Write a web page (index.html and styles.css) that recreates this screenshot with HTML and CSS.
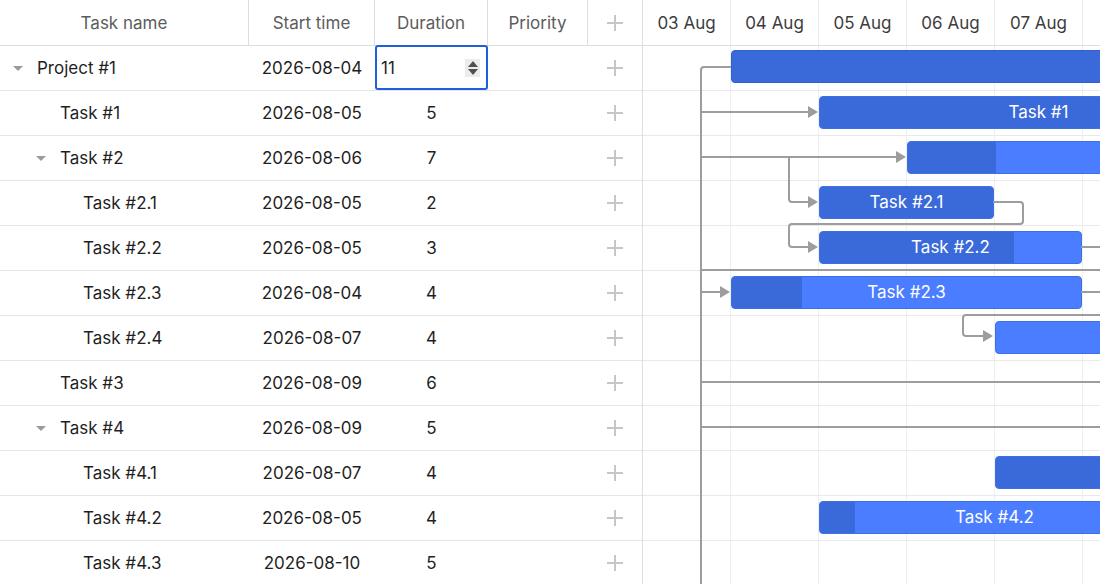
FILE: index.html
```html
<!DOCTYPE html>
<html lang="en">
<head>
    <meta charset="UTF-8">
    <meta name="viewport" content="width=device-width, initial-scale=1.0">
    <title>Gantt</title>
    <link rel="stylesheet" href="styles.css">
</head>
<body>
<div class="gantt">
    <div class="grid">
        <div class="grid-head">
            <div class="head-cell">Task name</div>
            <div class="head-cell">Start time</div>
            <div class="head-cell">Duration</div>
            <div class="head-cell">Priority</div>
            <div class="head-cell last">
                <svg class="plus" width="18" height="18" viewBox="0 0 18 18"><path d="M9 1V17M1 9H17"/></svg>
            </div>
        </div>

        <div class="grid-row">
            <div class="cell name"><span class="toggle"><i></i></span>Project #1</div>
            <div class="cell">2026-08-04</div>
            <div class="cell">
                <div class="editor">
                    <span>11</span>
                    <span class="spin"><i class="up"></i><i class="down"></i></span>
                </div>
            </div>
            <div class="cell"></div>
            <div class="cell"><svg class="plus" width="16" height="16" viewBox="0 0 16 16"><path d="M8 0V16M0 8H16"/></svg></div>
        </div>
        <div class="grid-row">
            <div class="cell name"><span class="indent"></span><span class="toggle"></span>Task #1</div>
            <div class="cell">2026-08-05</div>
            <div class="cell">5</div>
            <div class="cell"></div>
            <div class="cell"><svg class="plus" width="16" height="16" viewBox="0 0 16 16"><path d="M8 0V16M0 8H16"/></svg></div>
        </div>
        <div class="grid-row">
            <div class="cell name"><span class="indent"></span><span class="toggle"><i></i></span>Task #2</div>
            <div class="cell">2026-08-06</div>
            <div class="cell">7</div>
            <div class="cell"></div>
            <div class="cell"><svg class="plus" width="16" height="16" viewBox="0 0 16 16"><path d="M8 0V16M0 8H16"/></svg></div>
        </div>
        <div class="grid-row">
            <div class="cell name"><span class="indent"></span><span class="indent"></span><span class="toggle"></span>Task #2.1</div>
            <div class="cell">2026-08-05</div>
            <div class="cell">2</div>
            <div class="cell"></div>
            <div class="cell"><svg class="plus" width="16" height="16" viewBox="0 0 16 16"><path d="M8 0V16M0 8H16"/></svg></div>
        </div>
        <div class="grid-row">
            <div class="cell name"><span class="indent"></span><span class="indent"></span><span class="toggle"></span>Task #2.2</div>
            <div class="cell">2026-08-05</div>
            <div class="cell">3</div>
            <div class="cell"></div>
            <div class="cell"><svg class="plus" width="16" height="16" viewBox="0 0 16 16"><path d="M8 0V16M0 8H16"/></svg></div>
        </div>
        <div class="grid-row">
            <div class="cell name"><span class="indent"></span><span class="indent"></span><span class="toggle"></span>Task #2.3</div>
            <div class="cell">2026-08-04</div>
            <div class="cell">4</div>
            <div class="cell"></div>
            <div class="cell"><svg class="plus" width="16" height="16" viewBox="0 0 16 16"><path d="M8 0V16M0 8H16"/></svg></div>
        </div>
        <div class="grid-row">
            <div class="cell name"><span class="indent"></span><span class="indent"></span><span class="toggle"></span>Task #2.4</div>
            <div class="cell">2026-08-07</div>
            <div class="cell">4</div>
            <div class="cell"></div>
            <div class="cell"><svg class="plus" width="16" height="16" viewBox="0 0 16 16"><path d="M8 0V16M0 8H16"/></svg></div>
        </div>
        <div class="grid-row">
            <div class="cell name"><span class="indent"></span><span class="toggle"></span>Task #3</div>
            <div class="cell">2026-08-09</div>
            <div class="cell">6</div>
            <div class="cell"></div>
            <div class="cell"><svg class="plus" width="16" height="16" viewBox="0 0 16 16"><path d="M8 0V16M0 8H16"/></svg></div>
        </div>
        <div class="grid-row">
            <div class="cell name"><span class="indent"></span><span class="toggle"><i></i></span>Task #4</div>
            <div class="cell">2026-08-09</div>
            <div class="cell">5</div>
            <div class="cell"></div>
            <div class="cell"><svg class="plus" width="16" height="16" viewBox="0 0 16 16"><path d="M8 0V16M0 8H16"/></svg></div>
        </div>
        <div class="grid-row">
            <div class="cell name"><span class="indent"></span><span class="indent"></span><span class="toggle"></span>Task #4.1</div>
            <div class="cell">2026-08-07</div>
            <div class="cell">4</div>
            <div class="cell"></div>
            <div class="cell"><svg class="plus" width="16" height="16" viewBox="0 0 16 16"><path d="M8 0V16M0 8H16"/></svg></div>
        </div>
        <div class="grid-row">
            <div class="cell name"><span class="indent"></span><span class="indent"></span><span class="toggle"></span>Task #4.2</div>
            <div class="cell">2026-08-05</div>
            <div class="cell">4</div>
            <div class="cell"></div>
            <div class="cell"><svg class="plus" width="16" height="16" viewBox="0 0 16 16"><path d="M8 0V16M0 8H16"/></svg></div>
        </div>
        <div class="grid-row">
            <div class="cell name"><span class="indent"></span><span class="indent"></span><span class="toggle"></span>Task #4.3</div>
            <div class="cell">2026-08-10</div>
            <div class="cell">5</div>
            <div class="cell"></div>
            <div class="cell"><svg class="plus" width="16" height="16" viewBox="0 0 16 16"><path d="M8 0V16M0 8H16"/></svg></div>
        </div>
    </div>

    <div class="chart">
        <div class="scale">
            <div class="scale-cell">03 Aug</div>
            <div class="scale-cell">04 Aug</div>
            <div class="scale-cell">05 Aug</div>
            <div class="scale-cell">06 Aug</div>
            <div class="scale-cell">07 Aug</div>
            <div class="scale-cell"></div>
        </div>
        <div class="chart-body">
            <div class="chart-row">
                <div class="bar project" style="left:88px;width:967px"></div>
            </div>
            <div class="chart-row">
                <div class="bar" style="left:176px;width:439px"><div class="progress" style="width:80%"></div><div class="bar-text">Task #1</div></div>
            </div>
            <div class="chart-row">
                <div class="bar" style="left:264px;width:615px"><div class="progress" style="width:88px"></div></div>
            </div>
            <div class="chart-row">
                <div class="bar" style="left:176px;width:175px"><div class="progress" style="width:100%"></div><div class="bar-text">Task #2.1</div></div>
            </div>
            <div class="chart-row">
                <div class="bar" style="left:176px;width:263px"><div class="progress" style="width:194px"></div><div class="bar-text">Task #2.2</div></div>
            </div>
            <div class="chart-row">
                <div class="bar" style="left:88px;width:351px"><div class="progress" style="width:70px"></div><div class="bar-text">Task #2.3</div></div>
            </div>
            <div class="chart-row">
                <div class="bar" style="left:352px;width:351px"></div>
            </div>
            <div class="chart-row"></div>
            <div class="chart-row"></div>
            <div class="chart-row">
                <div class="bar" style="left:352px;width:351px"><div class="progress" style="width:60%"></div></div>
            </div>
            <div class="chart-row">
                <div class="bar" style="left:176px;width:351px"><div class="progress" style="width:35px"></div><div class="bar-text">Task #4.2</div></div>
            </div>
            <div class="chart-row"></div>
        </div>

        <!-- dependency links, drawn in page coordinates -->
        <svg class="links" width="457" height="584" viewBox="643 0 457 584">
            <g class="link-lines">
                <path d="M731 67 H704 Q701 67 701 70 V590"/>
                <path d="M701 112 H810"/>
                <path d="M701 157 H898"/>
                <path d="M701 270 H1100"/>
                <path d="M701 292 H722"/>
                <path d="M701 382 H1100"/>
                <path d="M701 427 H1100"/>
                <path d="M789 157 V199 Q789 202 792 202 H810"/>
                <path d="M993 202 H1020 Q1023 202 1023 205 V221 Q1023 224 1020 224 H792 Q789 224 789 227 V244 Q789 247 792 247 H810"/>
                <path d="M1081 247 H1100"/>
                <path d="M1081 292 H1100"/>
                <path d="M1100 315 H966 Q963 315 963 318 V333 Q963 336 966 336 H985"/>
            </g>
            <g class="link-arrows">
                <polygon points="808,106 818,112 808,118"/>
                <polygon points="896,151 906,157 896,163"/>
                <polygon points="808,196 818,202 808,208"/>
                <polygon points="808,241 818,247 808,253"/>
                <polygon points="720,286 730,292 720,298"/>
                <polygon points="983,330 993,336 983,342"/>
            </g>
        </svg>
    </div>
</div>
</body>
</html>
```

FILE: styles.css
```css
body {
    margin: 0;
    font-family: Inter, "Noto Sans", sans-serif;
    font-size: 17px;
    color: #1f1f1f;
    background-color: #fff;
    overflow: hidden;
}
.gantt {
    display: flex;
    height: 584px;
    overflow: hidden;
}

/* left grid */
.grid {
    width: 643px;
    flex: none;
    box-sizing: border-box;
    border-right: 1px solid #dedede;
}
.grid-head, .grid-row {
    display: grid;
    grid-template-columns: 249px 126px 113px 100px 54px;
    box-sizing: border-box;
}
.grid-head {
    height: 46px;
    border-bottom: 1px solid #dedede;
}
.head-cell {
    display: flex;
    align-items: center;
    justify-content: center;
    color: #5c5c5c;
    border-right: 1px solid #dedede;
}
.head-cell.last {
    border-right: none;
}
.grid-row {
    height: 45px;
    border-bottom: 1px solid #e6e6e6;
}
.cell {
    display: flex;
    align-items: center;
    justify-content: center;
    position: relative;
}
.cell.name {
    justify-content: flex-start;
    padding-left: 13px;
}
.indent {
    width: 23px;
    flex: none;
}
.toggle {
    width: 24px;
    flex: none;
    display: flex;
    align-items: center;
}
.toggle i {
    width: 0;
    height: 0;
    border-left: 5px solid transparent;
    border-right: 5px solid transparent;
    border-top: 5px solid #9b9b9b;
}
.plus path {
    stroke: #c6c6c6;
    stroke-width: 2;
    fill: none;
}

/* inline editor */
.editor {
    position: absolute;
    left: 0;
    top: -1px;
    width: 113px;
    height: 45px;
    box-sizing: border-box;
    border: 2px solid #1f5fd8;
    border-radius: 3px;
    display: flex;
    align-items: center;
    justify-content: space-between;
    padding: 0 6px 0 4px;
    background: #fff;
    z-index: 2;
}
.spin {
    width: 15px;
    height: 18px;
    background: #ececec;
    display: flex;
    flex-direction: column;
    align-items: center;
    justify-content: center;
    gap: 2px;
}
.spin i {
    width: 0;
    height: 0;
    border-left: 5px solid transparent;
    border-right: 5px solid transparent;
}
.spin .up {
    border-bottom: 6px solid #505050;
}
.spin .down {
    border-top: 6px solid #505050;
}

/* timeline */
.chart {
    flex: 1;
    position: relative;
    overflow: hidden;
}
.scale {
    display: flex;
    height: 46px;
    box-sizing: border-box;
    border-bottom: 1px solid #dedede;
}
.scale-cell {
    width: 88px;
    flex: none;
    box-sizing: border-box;
    border-right: 1px solid #ebebeb;
    display: flex;
    align-items: center;
    justify-content: center;
    color: #3d3d3d;
}
.chart-body {
    background-image: linear-gradient(to right, transparent 87px, #efefef 87px);
    background-size: 88px 100%;
}
.chart-row {
    position: relative;
    height: 45px;
    box-sizing: border-box;
    border-bottom: 1px solid #e9e9e9;
}
.bar {
    position: absolute;
    top: 5px;
    height: 33px;
    box-sizing: border-box;
    border-radius: 4px;
    border: 1px solid #3c6fe8;
    background-color: #4a7dff;
    color: #fff;
    overflow: hidden;
    white-space: nowrap;
}
.bar.project {
    top: 4px;
    background-color: #3a6ad9;
    border-color: #2f5fd3;
}
.progress {
    position: absolute;
    left: 0;
    top: 0;
    bottom: 0;
    background-color: #3a6ad9;
}
.bar-text {
    position: relative;
    text-align: center;
    line-height: 31px;
}
.links {
    position: absolute;
    left: 0;
    top: 0;
    pointer-events: none;
}
.link-lines path {
    fill: none;
    stroke: #9d9d9d;
    stroke-width: 2;
}
.link-arrows polygon {
    fill: #9d9d9d;
}
```
